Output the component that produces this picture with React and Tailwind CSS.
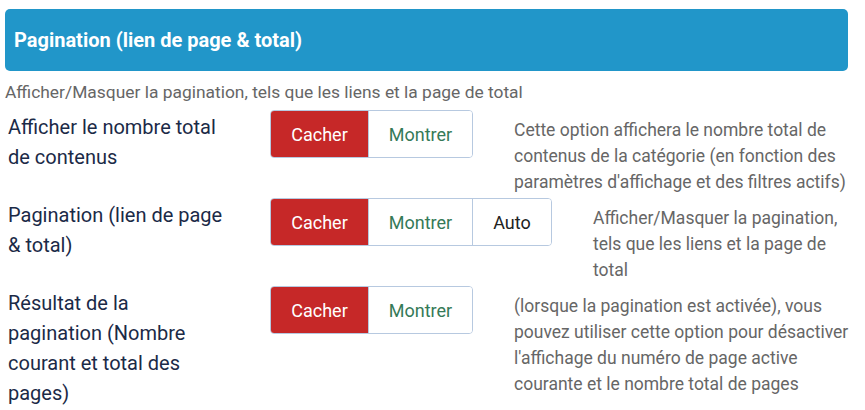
import React from "react";

const rows = [
  {
    label: "Afficher le nombre total de contenus",
    options: ["Cacher", "Montrer"],
    desc: "Cette option affichera le nombre total de contenus de la catégorie (en fonction des paramètres d'affichage et des filtres actifs)",
  },
  {
    label: "Pagination (lien de page & total)",
    options: ["Cacher", "Montrer", "Auto"],
    desc: "Afficher/Masquer la pagination, tels que les liens et la page de total",
  },
  {
    label: "Résultat de la pagination (Nombre courant et total des pages)",
    options: ["Cacher", "Montrer"],
    desc: "(lorsque la pagination est activée), vous pouvez utiliser cette option pour désactiver l'affichage du numéro de page active courante et le nombre total de pages",
  },
];

function ButtonGroup({ options }) {
  return (
    <div className="flex h-[48px] shrink-0 rounded-[4px] border border-[#b7c9e0] overflow-hidden">
      {options.map((opt, i) => {
        if (i === 0) {
          return (
            <div key={opt} className="w-[97px] flex items-center justify-center bg-[#c62828] text-white text-[18px]">
              {opt}
            </div>
          );
        }
        return (
          <div
            key={opt}
            className={
              "flex items-center justify-center bg-white text-[18px] border-l border-[#b7c9e0] " +
              (opt === "Auto" ? "w-[79px] text-[#222]" : "w-[104px] text-[#357a58]")
            }
          >
            {opt}
          </div>
        );
      })}
    </div>
  );
}

export default function App() {
  return (
    <div className="w-[865px] h-[410px] overflow-hidden bg-white pt-[9px] font-['Roboto',sans-serif]">
      <div className="mx-[5px] w-[843px] h-[62px] rounded-[5px] bg-[#2196c9] flex items-center px-[9px]">
        <h2 className="text-white font-bold text-[20px]">Pagination (lien de page &amp; total)</h2>
      </div>
      <p className="ml-[5px] mt-[9px] text-[17.4px] leading-[24px] text-[#666]">
        Afficher/Masquer la pagination, tels que les liens et la page de total
      </p>

      <div className="mt-[6px] w-[850px]">
        {rows.map((row) => (
          <div key={row.label} className="flex items-start pl-[8px] min-h-[88px]">
            <div className="w-[218px] mt-[2px] shrink-0 text-[20px] leading-[30px] text-[#1b2a47]">{row.label}</div>
            <div className="ml-[44px]">
              <ButtonGroup options={row.options} />
            </div>
            <p className="ml-[41px] mt-[7px] flex-1 text-[17.5px] leading-[26px] text-[#666]">{row.desc}</p>
          </div>
        ))}
      </div>
    </div>
  );
}
